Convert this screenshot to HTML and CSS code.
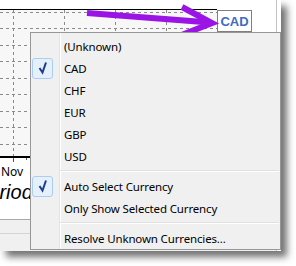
FILE: index.html
```html
<!DOCTYPE html>
<html lang="en">
<head>
    <meta charset="UTF-8">
    <title>Currency menu</title>
    <link rel="stylesheet" href="styles.css">
</head>
<body>
    <div class="shot">
        <svg class="chart" width="281" height="251" viewBox="0 0 281 251">
            <rect x="0" y="10" width="217" height="147" fill="#f7f7f7"/>
            <line x1="0" y1="9.5" x2="217" y2="9.5" stroke="#000"/>
            <g stroke="#8a8a8a" stroke-dasharray="3 3">
                <line x1="0" y1="12.5" x2="217" y2="12.5"/>
                <line x1="0" y1="28.5" x2="217" y2="28.5"/>
                <line x1="0" y1="45.5" x2="217" y2="45.5"/>
                <line x1="0" y1="61.5" x2="217" y2="61.5"/>
                <line x1="0" y1="78.5" x2="217" y2="78.5"/>
                <line x1="0" y1="94.5" x2="217" y2="94.5"/>
                <line x1="0" y1="111.5" x2="217" y2="111.5"/>
                <line x1="0" y1="127.5" x2="217" y2="127.5"/>
                <line x1="0" y1="144.5" x2="217" y2="144.5"/>
                <line x1="13.5" y1="10" x2="13.5" y2="157"/>
                <line x1="64.5" y1="10" x2="64.5" y2="157"/>
                <line x1="115.5" y1="10" x2="115.5" y2="157"/>
                <line x1="166.5" y1="10" x2="166.5" y2="157"/>
            </g>
            <line x1="0" y1="157" x2="217" y2="157" stroke="#000" stroke-width="2"/>
            <line x1="13.5" y1="158" x2="13.5" y2="162" stroke="#555"/>
            <line x1="26.5" y1="158" x2="26.5" y2="160" stroke="#555"/>
            <text class="axis-label" x="12" y="176" text-anchor="middle">Nov</text>
            <text class="chart-title" x="-25" y="199">Period</text>
            <rect x="0" y="219" width="276" height="32" fill="#f0f0f0"/>
            <line x1="0" y1="219.5" x2="276" y2="219.5" stroke="#a8a8a8"/>
            <line x1="0" y1="233.5" x2="276" y2="233.5" stroke="#d4d4d4"/>
            <line x1="276.5" y1="0" x2="276.5" y2="251" stroke="#c4c4c4"/>
        </svg>

        <div class="currency-btn">CAD</div>

        <svg class="callout-arrow" width="240" height="45" viewBox="0 0 240 45">
            <line x1="87" y1="13" x2="210" y2="22.5" stroke="#9b14e6" stroke-width="6"/>
            <polyline points="182,7 212,23 179,36" fill="none" stroke="#9b14e6" stroke-width="6" stroke-linejoin="miter"/>
        </svg>

        <div class="menu">
            <div class="menu-item"><span class="gutter"></span><span>(Unknown)</span></div>
            <div class="menu-item"><span class="gutter"><span class="check"><svg width="21" height="21" viewBox="0 0 21 21"><polyline points="7.5,10 10.5,14.5 14,4.5" fill="none" stroke="#1c3c8f" stroke-width="2"/></svg></span></span><span>CAD</span></div>
            <div class="menu-item"><span class="gutter"></span><span>CHF</span></div>
            <div class="menu-item"><span class="gutter"></span><span>EUR</span></div>
            <div class="menu-item"><span class="gutter"></span><span>GBP</span></div>
            <div class="menu-item"><span class="gutter"></span><span>USD</span></div>
            <div class="menu-sep"></div>
            <div class="menu-item"><span class="gutter"><span class="check"><svg width="21" height="21" viewBox="0 0 21 21"><polyline points="7.5,10 10.5,14.5 14,4.5" fill="none" stroke="#1c3c8f" stroke-width="2"/></svg></span></span><span>Auto Select Currency</span></div>
            <div class="menu-item"><span class="gutter"></span><span>Only Show Selected Currency</span></div>
            <div class="menu-sep"></div>
            <div class="menu-item"><span class="gutter"></span><span>Resolve Unknown Currencies...</span></div>
        </div>
    </div>
</body>
</html>
```

FILE: styles.css
```css
/* Page */
html,
body {
    margin: 0;
    background: #fff;
}

body {
    width: 296px;
    height: 266px;
    overflow: hidden;
    font-family: 'Noto Sans', 'Open Sans', sans-serif;
}

/* Screenshot frame with its drop shadow */
.shot {
    position: relative;
    width: 281px;
    height: 251px;
    background: #fff;
    box-shadow: 6px 6px 7px rgba(0, 0, 0, 0.55);
}

.chart {
    display: block;
}

.axis-label {
    font-family: 'Noto Sans', sans-serif;
    font-size: 12px;
    fill: #000;
}

.chart-title {
    font-family: 'Liberation Sans', sans-serif;
    font-style: italic;
    font-size: 20px;
    fill: #000;
}

.currency-btn {
    position: absolute;
    left: 217px;
    top: 10px;
    width: 33px;
    height: 20px;
    border: 1px solid #7f7f7f;
    background: #fff;
    color: #3d6cc0;
    font-family: 'Liberation Sans', sans-serif;
    font-weight: bold;
    font-size: 13px;
    line-height: 21px;
    text-align: center;
}

.callout-arrow {
    position: absolute;
    left: 0;
    top: 0;
    pointer-events: none;
}

/* Context menu */
.menu {
    position: absolute;
    left: 30px;
    top: 32px;
    width: 249px;
    padding: 2px 0 0;
    border: 1px solid #979797;
    background-color: #f0f0f0;
    background-image: linear-gradient(to right, transparent 28px, #e2e3e3 28px, #e2e3e3 29px, #fff 29px, #fff 30px, transparent 30px);
    font-size: 11.5px;
    letter-spacing: -0.15px;
    color: #000;
}

.menu-item {
    display: flex;
    align-items: center;
    height: 22px;
}

.gutter {
    flex: none;
    display: flex;
    align-items: center;
    width: 33px;
    height: 22px;
}

.check {
    display: block;
    box-sizing: border-box;
    width: 21px;
    height: 21px;
    margin-left: 1px;
    border: 1px solid #aacdf3;
    border-radius: 3px;
    background: #e6f0fb;
}

.check svg {
    display: block;
    margin: -1px;
}

.menu-sep {
    height: 8px;
    margin: 0 1px 0 29px;
    background: linear-gradient(#0000 3px, #e0e0e0 3px, #e0e0e0 4px, #fff 4px, #fff 5px, #0000 5px);
}
```
